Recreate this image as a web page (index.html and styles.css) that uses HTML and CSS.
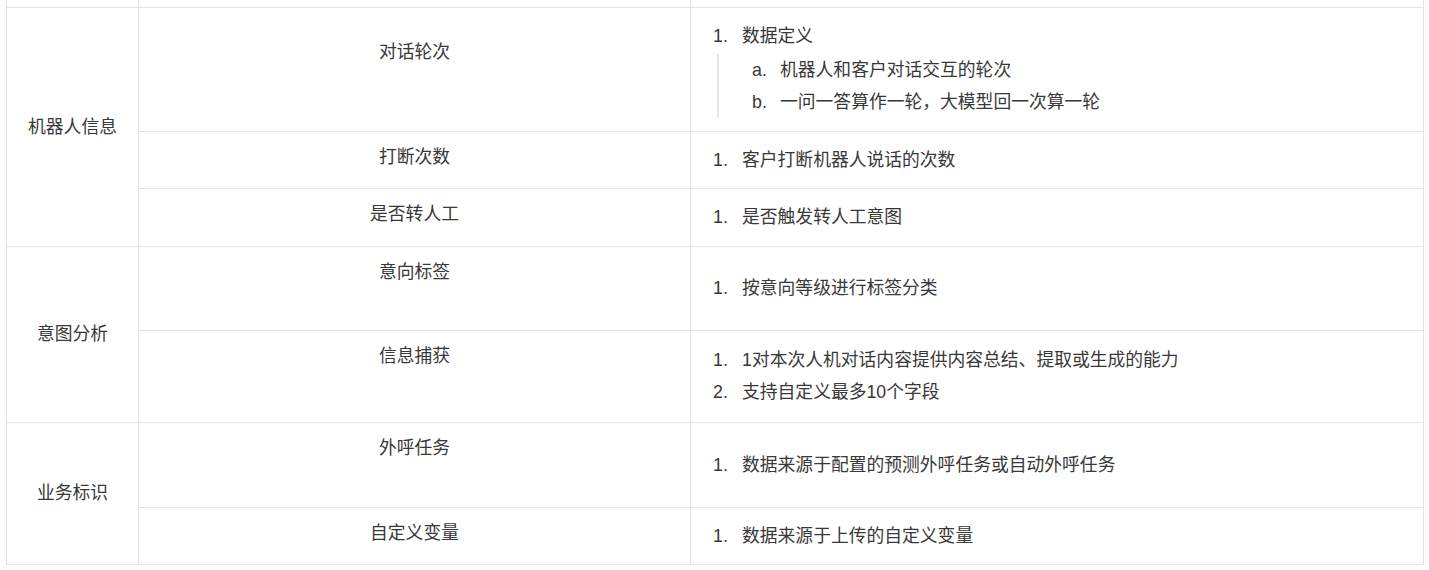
FILE: index.html
```html
<!DOCTYPE html>
<html lang="zh">
<head>
<meta charset="utf-8">
<link rel="stylesheet" href="styles.css">
</head>
<body>
<div class="wrap">
<table class="spec">
  <colgroup>
    <col class="c1"><col class="c2"><col class="c3">
  </colgroup>
  <tr class="r-stub"><td></td><td></td><td></td></tr>
  <tr class="r-124">
    <td class="group" rowspan="3">机器人信息</td>
    <td class="field field-low">对话轮次</td>
    <td class="desc">
      <ol class="list">
        <li><span class="mk">1.</span>数据定义
          <ol class="sub">
            <li><span class="mk">a.</span>机器人和客户对话交互的轮次</li>
            <li><span class="mk">b.</span>一问一答算作一轮，大模型回一次算一轮</li>
          </ol>
        </li>
      </ol>
    </td>
  </tr>
  <tr class="r-57">
    <td class="field">打断次数</td>
    <td class="desc"><ol class="list"><li><span class="mk">1.</span>客户打断机器人说话的次数</li></ol></td>
  </tr>
  <tr class="r-58">
    <td class="field">是否转人工</td>
    <td class="desc"><ol class="list"><li><span class="mk">1.</span>是否触发转人工意图</li></ol></td>
  </tr>
  <tr class="r-84">
    <td class="group" rowspan="2">意图分析</td>
    <td class="field">意向标签</td>
    <td class="desc"><ol class="list"><li><span class="mk">1.</span>按意向等级进行标签分类</li></ol></td>
  </tr>
  <tr class="r-92">
    <td class="field">信息捕获</td>
    <td class="desc">
      <ol class="list">
        <li><span class="mk">1.</span>1对本次人机对话内容提供内容总结、提取或生成的能力</li>
        <li><span class="mk">2.</span>支持自定义最多10个字段</li>
      </ol>
    </td>
  </tr>
  <tr class="r-85">
    <td class="group" rowspan="2">业务标识</td>
    <td class="field">外呼任务</td>
    <td class="desc"><ol class="list"><li><span class="mk">1.</span>数据来源于配置的预测外呼任务或自动外呼任务</li></ol></td>
  </tr>
  <tr class="r-57">
    <td class="field">自定义变量</td>
    <td class="desc"><ol class="list"><li><span class="mk">1.</span>数据来源于上传的自定义变量</li></ol></td>
  </tr>
</table>
</div>
</body>
</html>
```

FILE: styles.css
```css
html, body {
  margin: 0;
  padding: 0;
  background: #ffffff;
}

body {
  font-family: "Liberation Sans", "Noto Sans CJK SC", sans-serif;
  font-size: 17.8px;
  color: #383838;
}

.wrap {
  padding-left: 6px;
}

.spec {
  border-collapse: collapse;
  table-layout: fixed;
  width: 1417px;
}

.c1 { width: 132px; }
.c2 { width: 552px; }
.c3 { width: 733px; }

.spec td {
  border: 1px solid #e3e3e3;
  padding: 0;
  line-height: 26px;
}

.r-stub { height: 7px; }
.r-stub td { border-top: none; }

.r-124 { height: 124px; }
.r-57 { height: 57px; }
.r-58 { height: 58px; }
.r-84 { height: 84px; }
.r-92 { height: 92px; }
.r-85 { height: 85px; }

.spec td.group {
  text-align: center;
  vertical-align: middle;
}

.spec td.field {
  text-align: center;
  vertical-align: top;
  padding-top: 12px;
}

.spec td.field-low {
  padding-top: 31px;
}

.spec td.desc {
  vertical-align: middle;
  padding-left: 22px;
}

.list {
  list-style: none;
  margin: 0;
  padding: 0;
}

.list li {
  line-height: 32px;
}

.mk {
  display: inline-block;
  width: 29px;
}

.sub {
  list-style: none;
  margin: 2px 0 0 4px;
  padding: 0 0 0 33px;
  border-left: 2px solid #e6e6e6;
}

.sub .mk {
  width: 28px;
}
```
